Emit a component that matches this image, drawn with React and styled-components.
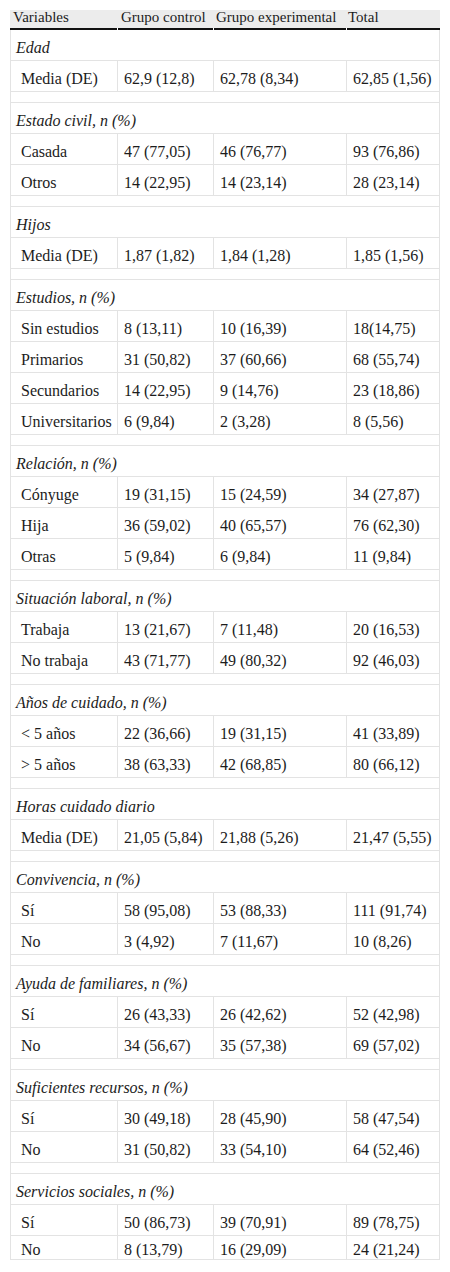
import React from 'react';
import styled, { createGlobalStyle } from 'styled-components';

const GlobalStyle = createGlobalStyle`
  body {
    margin: 0;
    background: #fff;
    font-family: "Liberation Serif", "DejaVu Serif", serif;
    color: #1c1c1c;
  }
`

const Page = styled.div`
  padding: 10px 10px 0;
`

const Table = styled.table`
  width: 430px;
  border-collapse: separate;
  border-spacing: 0;
  table-layout: fixed;
  font-family: "Liberation Serif", "DejaVu Serif", serif;
  color: #1c1c1c;
`

const HeadCell = styled.th`
  box-sizing: border-box;
  width: ${props => props.$w}px;
  padding: 0 3px 5px ${props => props.$pl || 3}px;
  font-family: "Liberation Serif", serif;
  font-size: 15px;
  line-height: 15px;
  font-weight: normal;
  text-align: left;
  white-space: nowrap;
  background:
    linear-gradient(#fff, #fff) left bottom / ${props => props.$first ? 0 : 1}px 2px no-repeat,
    linear-gradient(#111, #111) left bottom / 100% 2px no-repeat,
    #ececec;
`

const Cell = styled.td`
  box-sizing: border-box;
  padding: ${props => props.$last ? '5px 6px 0' : '9px 6px 3px'};
  padding-left: ${props => props.$label ? 10 : 6}px;
  font-family: "Liberation Serif", serif;
  font-size: 16px;
  line-height: 18px;
  white-space: nowrap;
  border-bottom: 1px solid #e3e3e3;
  border-left: 1px solid #e3e3e3;

  &:last-child {
    border-right: 1px solid #e3e3e3;
  }
`

const SectionCell = styled(Cell)`
  padding-left: 5px;
  font-style: italic;
`

const SpacerCell = styled.td`
  height: 10px;
  padding: 0;
  border-bottom: 1px solid #e3e3e3;
  border-left: 1px solid #e3e3e3;
  border-right: 1px solid #e3e3e3;
`

const sections = [
  { title: 'Edad', rows: [['Media (DE)', '62,9 (12,8)', '62,78 (8,34)', '62,85 (1,56)']] },
  {
    title: 'Estado civil, n (%)',
    rows: [
      ['Casada', '47 (77,05)', '46 (76,77)', '93 (76,86)'],
      ['Otros', '14 (22,95)', '14 (23,14)', '28 (23,14)'],
    ],
  },
  { title: 'Hijos', rows: [['Media (DE)', '1,87 (1,82)', '1,84 (1,28)', '1,85 (1,56)']] },
  {
    title: 'Estudios, n (%)',
    rows: [
      ['Sin estudios', '8 (13,11)', '10 (16,39)', '18(14,75)'],
      ['Primarios', '31 (50,82)', '37 (60,66)', '68 (55,74)'],
      ['Secundarios', '14 (22,95)', '9 (14,76)', '23 (18,86)'],
      ['Universitarios', '6 (9,84)', '2 (3,28)', '8 (5,56)'],
    ],
  },
  {
    title: 'Relación, n (%)',
    rows: [
      ['Cónyuge', '19 (31,15)', '15 (24,59)', '34 (27,87)'],
      ['Hija', '36 (59,02)', '40 (65,57)', '76 (62,30)'],
      ['Otras', '5 (9,84)', '6 (9,84)', '11 (9,84)'],
    ],
  },
  {
    title: 'Situación laboral, n (%)',
    rows: [
      ['Trabaja', '13 (21,67)', '7 (11,48)', '20 (16,53)'],
      ['No trabaja', '43 (71,77)', '49 (80,32)', '92 (46,03)'],
    ],
  },
  {
    title: 'Años de cuidado, n (%)',
    rows: [
      ['< 5 años', '22 (36,66)', '19 (31,15)', '41 (33,89)'],
      ['> 5 años', '38 (63,33)', '42 (68,85)', '80 (66,12)'],
    ],
  },
  { title: 'Horas cuidado diario', rows: [['Media (DE)', '21,05 (5,84)', '21,88 (5,26)', '21,47 (5,55)']] },
  {
    title: 'Convivencia, n (%)',
    rows: [
      ['Sí', '58 (95,08)', '53 (88,33)', '111 (91,74)'],
      ['No', '3 (4,92)', '7 (11,67)', '10 (8,26)'],
    ],
  },
  {
    title: 'Ayuda de familiares, n (%)',
    rows: [
      ['Sí', '26 (43,33)', '26 (42,62)', '52 (42,98)'],
      ['No', '34 (56,67)', '35 (57,38)', '69 (57,02)'],
    ],
  },
  {
    title: 'Suficientes recursos, n (%)',
    rows: [
      ['Sí', '30 (49,18)', '28 (45,90)', '58 (47,54)'],
      ['No', '31 (50,82)', '33 (54,10)', '64 (52,46)'],
    ],
  },
  {
    title: 'Servicios sociales, n (%)',
    rows: [
      ['Sí', '50 (86,73)', '39 (70,91)', '89 (78,75)'],
      ['No', '8 (13,79)', '16 (29,09)', '24 (21,24)'],
    ],
  },
]

function App() {
  return (
    <Page>
      <GlobalStyle />
      <Table>
        <thead>
          <tr>
            <HeadCell $w={107} $first>Variables</HeadCell>
            <HeadCell $w={96} $pl={4}>Grupo control</HeadCell>
            <HeadCell $w={133}>Grupo experimental</HeadCell>
            <HeadCell $w={94} $pl={2}>Total</HeadCell>
          </tr>
        </thead>
        <tbody>
          {sections.map((section, si) => {
            const lastSection = si === sections.length - 1
            return (
              <React.Fragment key={section.title}>
                <tr>
                  <SectionCell colSpan={4}>{section.title}</SectionCell>
                </tr>
                {section.rows.map((row, ri) => {
                  const last = lastSection && ri === section.rows.length - 1
                  return (
                    <tr key={ri}>
                      {row.map((value, ci) => (
                        <Cell key={ci} $label={ci === 0} $last={last}>{value}</Cell>
                      ))}
                    </tr>
                  )
                })}
                {!lastSection && (
                  <tr>
                    <SpacerCell colSpan={4} />
                  </tr>
                )}
              </React.Fragment>
            )
          })}
        </tbody>
      </Table>
    </Page>
  );
}

export default App;
